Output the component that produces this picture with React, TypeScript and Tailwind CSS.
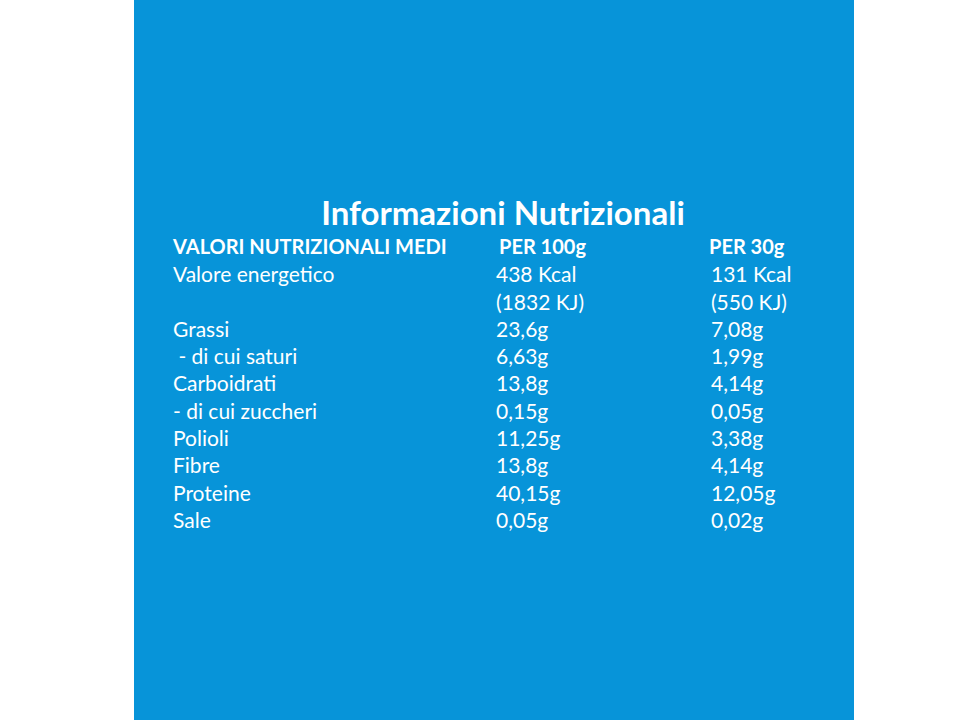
const rows: [string, string, string][] = [
    ['Valore energetico', '438 Kcal', '131 Kcal'],
    ['', '(1832 KJ)', '(550 KJ)'],
    ['Grassi', '23,6g', '7,08g'],
    ['\u00a0- di cui saturi', '6,63g', '1,99g'],
    ['Carboidrati', '13,8g', '4,14g'],
    ['- di cui zuccheri', '0,15g', '0,05g'],
    ['Polioli', '11,25g', '3,38g'],
    ['Fibre', '13,8g', '4,14g'],
    ['Proteine', '40,15g', '12,05g'],
    ['Sale', '0,05g', '0,02g'],
];

export default function App() {
    return (
        <div className="min-h-screen bg-white" style={{ fontFamily: 'Lato, "Open Sans", sans-serif' }}>
            <div className="ml-[134px] h-[720px] w-[720px] bg-[#0794d9] pt-[191px] text-white">
                <h1 className="pl-[18px] text-center text-[33px] font-bold leading-[42px]">
                    Informazioni Nutrizionali
                </h1>
                <div className="grid grid-cols-[323px_213px_1fr] pl-[39px] text-[21px] leading-[27.3px]">
                    <div className="text-[20px] font-bold">VALORI NUTRIZIONALI MEDI</div>
                    <div className="pl-[3px] text-[20px] font-bold">PER 100g</div>
                    <div className="text-[20px] font-bold">PER 30g</div>
                    {rows.map(([label, a, b], i) => (
                        <div key={i} className="contents">
                            <div>{label}</div>
                            <div>{a}</div>
                            <div className="pl-[2px]">{b}</div>
                        </div>
                    ))}
                </div>
            </div>
        </div>
    );
}
